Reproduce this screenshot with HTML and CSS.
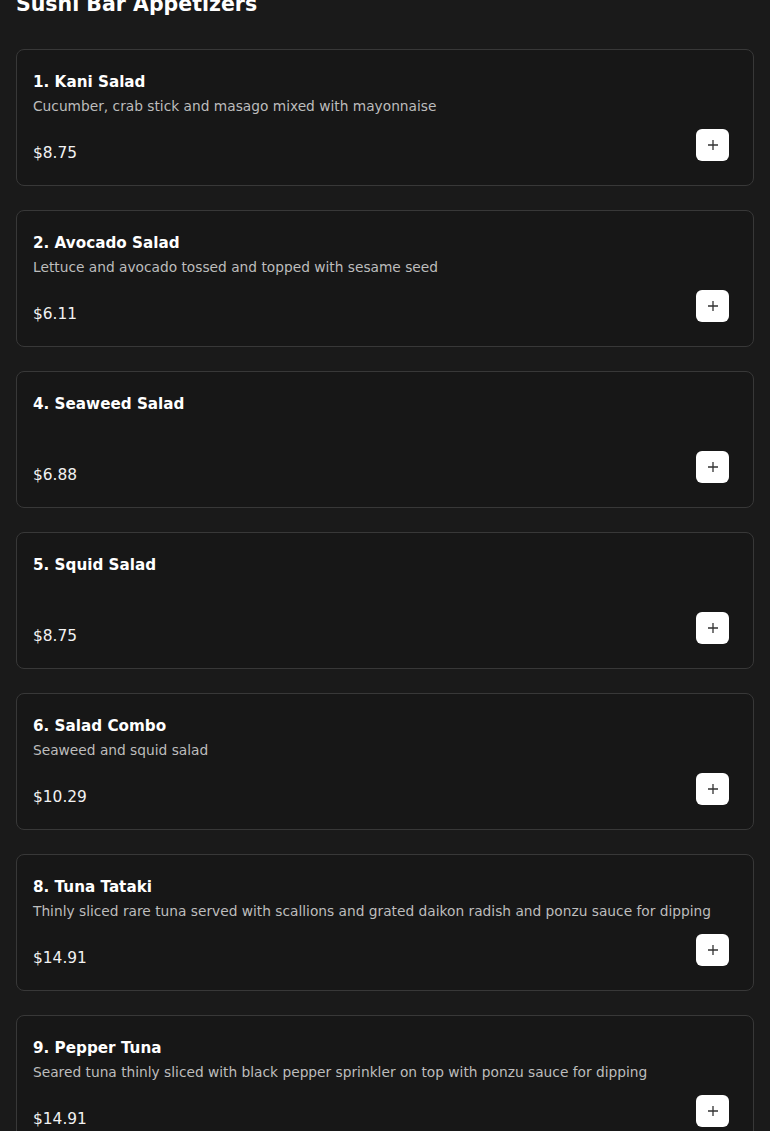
FILE: index.html
```html
<!DOCTYPE html>
<html lang="en">
<head>
<meta charset="utf-8">
<title>Sushi Bar Appetizers</title>
<link rel="stylesheet" href="styles.css">
</head>
<body>
<main class="menu">
  <h2 class="section-title">Sushi Bar Appetizers</h2>
  <ul class="items">
    <li class="card">
      <h3 class="item-name">1. Kani Salad</h3>
      <p class="item-desc">Cucumber, crab stick and masago mixed with mayonnaise</p>
      <div class="item-foot"><span class="price">$8.75</span><button class="add" aria-label="Add"><svg viewBox="0 0 12 12" width="12" height="12"><path d="M6 1v10M1 6h10"/></svg></button></div>
    </li>
    <li class="card">
      <h3 class="item-name">2. Avocado Salad</h3>
      <p class="item-desc">Lettuce and avocado tossed and topped with sesame seed</p>
      <div class="item-foot"><span class="price">$6.11</span><button class="add" aria-label="Add"><svg viewBox="0 0 12 12" width="12" height="12"><path d="M6 1v10M1 6h10"/></svg></button></div>
    </li>
    <li class="card">
      <h3 class="item-name">4. Seaweed Salad</h3>
      <p class="item-desc"></p>
      <div class="item-foot"><span class="price">$6.88</span><button class="add" aria-label="Add"><svg viewBox="0 0 12 12" width="12" height="12"><path d="M6 1v10M1 6h10"/></svg></button></div>
    </li>
    <li class="card">
      <h3 class="item-name">5. Squid Salad</h3>
      <p class="item-desc"></p>
      <div class="item-foot"><span class="price">$8.75</span><button class="add" aria-label="Add"><svg viewBox="0 0 12 12" width="12" height="12"><path d="M6 1v10M1 6h10"/></svg></button></div>
    </li>
    <li class="card">
      <h3 class="item-name">6. Salad Combo</h3>
      <p class="item-desc">Seaweed and squid salad</p>
      <div class="item-foot"><span class="price">$10.29</span><button class="add" aria-label="Add"><svg viewBox="0 0 12 12" width="12" height="12"><path d="M6 1v10M1 6h10"/></svg></button></div>
    </li>
    <li class="card">
      <h3 class="item-name">8. Tuna Tataki</h3>
      <p class="item-desc">Thinly sliced rare tuna served with scallions and grated daikon radish and ponzu sauce for dipping</p>
      <div class="item-foot"><span class="price">$14.91</span><button class="add" aria-label="Add"><svg viewBox="0 0 12 12" width="12" height="12"><path d="M6 1v10M1 6h10"/></svg></button></div>
    </li>
    <li class="card">
      <h3 class="item-name">9. Pepper Tuna</h3>
      <p class="item-desc">Seared tuna thinly sliced with black pepper sprinkler on top with ponzu sauce for dipping</p>
      <div class="item-foot"><span class="price">$14.91</span><button class="add" aria-label="Add"><svg viewBox="0 0 12 12" width="12" height="12"><path d="M6 1v10M1 6h10"/></svg></button></div>
    </li>
  </ul>
</main>
</body>
</html>
```

FILE: styles.css
```css
html, body {
  margin: 0;
  padding: 0;
  background: #1a1a1a;
  color: #fff;
  font-family: "DejaVu Sans", "Noto Sans", sans-serif;
  overflow: hidden;
}

.menu {
  padding: 0 16px;
}

.section-title {
  margin: -16px 0 0;
  font-size: 20.5px;
  line-height: 40px;
  font-weight: 700;
  color: #fff;
}

.items {
  list-style: none;
  margin: 25px 0 0;
  padding: 0;
  display: flex;
  flex-direction: column;
  gap: 24px;
}

.card {
  display: flex;
  flex-direction: column;
  border: 1px solid #383838;
  border-radius: 8px;
  background: #171717;
  padding: 20px 24px 24px 16px;
}

.item-name {
  margin: 0;
  font-size: 15.2px;
  line-height: 24px;
  font-weight: 700;
  color: #fff;
}

.item-desc {
  margin: 0;
  min-height: 24px;
  font-size: 13.75px;
  line-height: 24px;
  color: #bdbdbd;
}

.item-foot {
  margin-top: 11px;
  display: flex;
  justify-content: space-between;
  align-items: flex-end;
}

.price {
  font-size: 15.4px;
  line-height: 24px;
  color: #f2f2f2;
  margin-bottom: -4px;
}

.add {
  width: 33px;
  height: 32px;
  border: 0;
  border-radius: 6px;
  background: #fff;
  display: flex;
  align-items: center;
  justify-content: center;
  padding: 0;
}

.add svg {
  stroke: #333;
  stroke-width: 1.3;
  fill: none;
}
```
